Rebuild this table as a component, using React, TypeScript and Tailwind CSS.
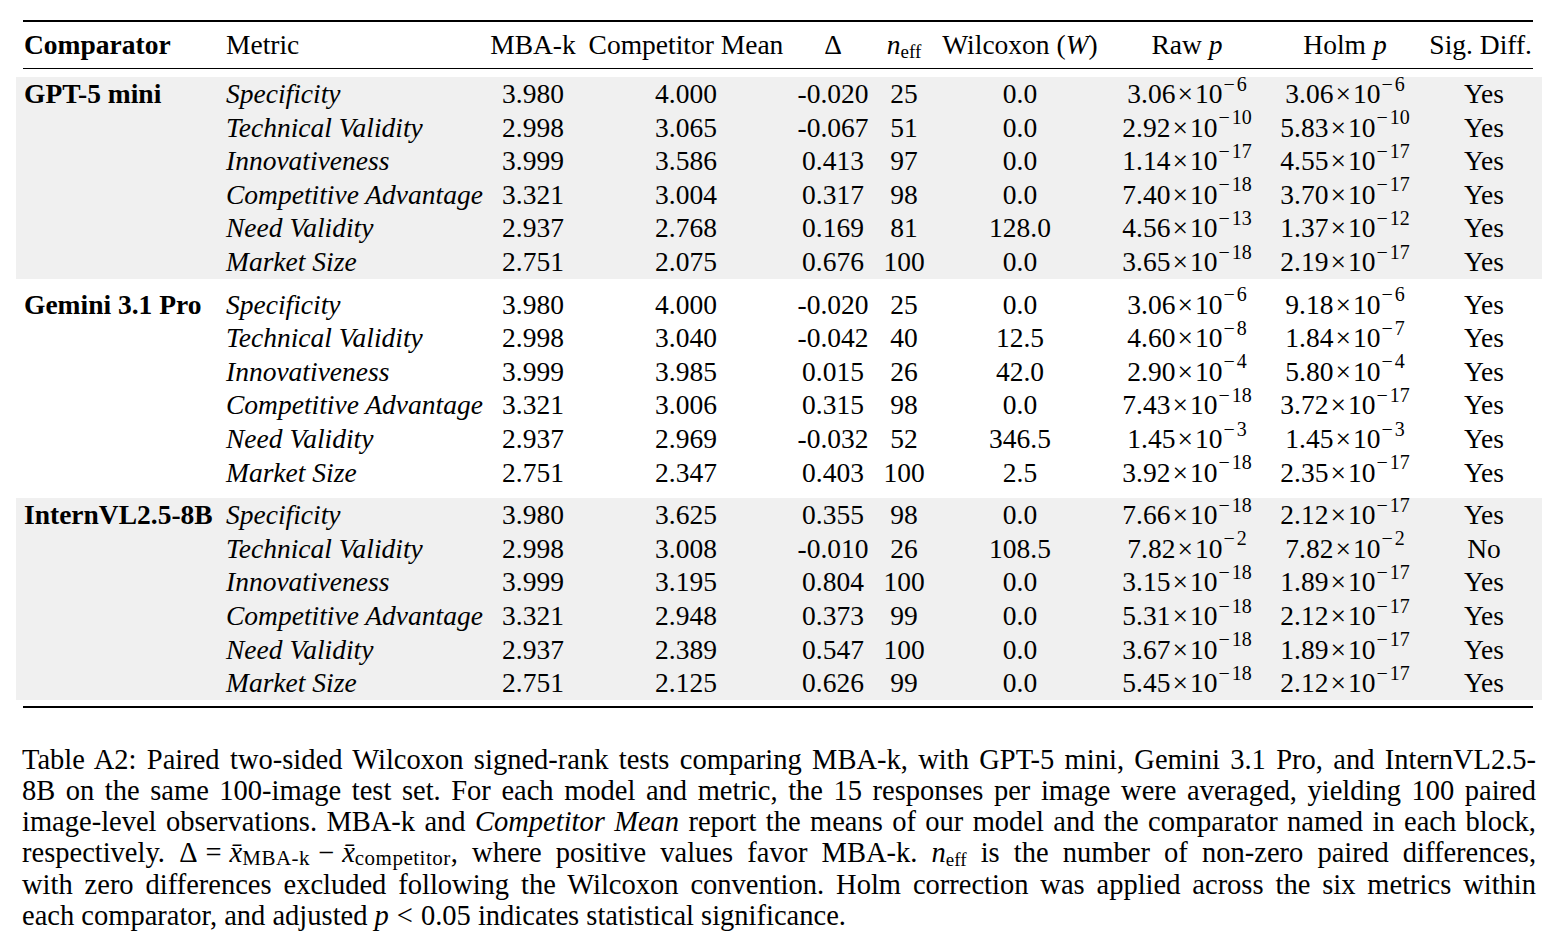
type Row = [string, string, string, string, string, string, [string, string], [string, string], string];

const groups: { name: string; shaded: boolean; rows: Row[] }[] = [
  {
    name: 'GPT-5 mini',
    shaded: true,
    rows: [
      ['Specificity', '3.980', '4.000', '-0.020', '25', '0.0', ['3.06', '6'], ['3.06', '6'], 'Yes'],
      ['Technical Validity', '2.998', '3.065', '-0.067', '51', '0.0', ['2.92', '10'], ['5.83', '10'], 'Yes'],
      ['Innovativeness', '3.999', '3.586', '0.413', '97', '0.0', ['1.14', '17'], ['4.55', '17'], 'Yes'],
      ['Competitive Advantage', '3.321', '3.004', '0.317', '98', '0.0', ['7.40', '18'], ['3.70', '17'], 'Yes'],
      ['Need Validity', '2.937', '2.768', '0.169', '81', '128.0', ['4.56', '13'], ['1.37', '12'], 'Yes'],
      ['Market Size', '2.751', '2.075', '0.676', '100', '0.0', ['3.65', '18'], ['2.19', '17'], 'Yes'],
    ],
  },
  {
    name: 'Gemini 3.1 Pro',
    shaded: false,
    rows: [
      ['Specificity', '3.980', '4.000', '-0.020', '25', '0.0', ['3.06', '6'], ['9.18', '6'], 'Yes'],
      ['Technical Validity', '2.998', '3.040', '-0.042', '40', '12.5', ['4.60', '8'], ['1.84', '7'], 'Yes'],
      ['Innovativeness', '3.999', '3.985', '0.015', '26', '42.0', ['2.90', '4'], ['5.80', '4'], 'Yes'],
      ['Competitive Advantage', '3.321', '3.006', '0.315', '98', '0.0', ['7.43', '18'], ['3.72', '17'], 'Yes'],
      ['Need Validity', '2.937', '2.969', '-0.032', '52', '346.5', ['1.45', '3'], ['1.45', '3'], 'Yes'],
      ['Market Size', '2.751', '2.347', '0.403', '100', '2.5', ['3.92', '18'], ['2.35', '17'], 'Yes'],
    ],
  },
  {
    name: 'InternVL2.5-8B',
    shaded: true,
    rows: [
      ['Specificity', '3.980', '3.625', '0.355', '98', '0.0', ['7.66', '18'], ['2.12', '17'], 'Yes'],
      ['Technical Validity', '2.998', '3.008', '-0.010', '26', '108.5', ['7.82', '2'], ['7.82', '2'], 'No'],
      ['Innovativeness', '3.999', '3.195', '0.804', '100', '0.0', ['3.15', '18'], ['1.89', '17'], 'Yes'],
      ['Competitive Advantage', '3.321', '2.948', '0.373', '99', '0.0', ['5.31', '18'], ['2.12', '17'], 'Yes'],
      ['Need Validity', '2.937', '2.389', '0.547', '100', '0.0', ['3.67', '18'], ['1.89', '17'], 'Yes'],
      ['Market Size', '2.751', '2.125', '0.626', '99', '0.0', ['5.45', '18'], ['2.12', '17'], 'Yes'],
    ],
  },
];

// p-values are typeset like LaTeX math: m × 10^-e
const Sci = ({ v }: { v: [string, string] }) => (
  <span className="whitespace-nowrap">
    {v[0]}
    <span className="mx-[2px]">×</span>
    10
    <sup className="text-[20px] top-[-0.62em] ml-[1px]">
      <span className="mr-[2px]">−</span>
      {v[1]}
    </sup>
  </span>
);

const Neff = () => (
  <span>
    <span className="italic">n</span>
    <sub className="text-[19px] bottom-[-0.2em]">eff</sub>
  </span>
);

const XBar = ({ sub }: { sub: string }) => (
  <span className="whitespace-nowrap">
    <span className="italic">x̄</span>
    <sub className="text-[21px] bottom-[-0.15em] tracking-[0.5px]">{sub}</sub>
  </span>
);

const cell = 'shrink-0 whitespace-nowrap';
const line = 'whitespace-nowrap text-justify [text-align-last:justify]';

const App = () => {
  return (
    <div className="w-[1558px] h-[948px] bg-white text-black font-['Liberation_Serif',serif] overflow-hidden pt-[20px] pl-[23px]">
      <div className="w-[1510px] text-[27.5px] leading-none">
        <div className="h-[2px] bg-black" />
        <div className="flex items-center h-[46px]">
          <div className={`${cell} w-[201px] pl-[1px] font-bold`}>Comparator</div>
          <div className={`${cell} w-[265px] pl-[2px]`}>Metric</div>
          <div className={`${cell} w-[88px] text-center`}>MBA-k</div>
          <div className={`${cell} w-[218px] text-center`}>Competitor Mean</div>
          <div className={`${cell} w-[76px] text-center`}>Δ</div>
          <div className={`${cell} w-[66px] text-center`}>
            <Neff />
          </div>
          <div className={`${cell} w-[166px] text-center`}>
            Wilcoxon (<span className="italic">W</span>)
          </div>
          <div className={`${cell} w-[168px] text-center`}>
            Raw <span className="italic">p</span>
          </div>
          <div className={`${cell} w-[148px] text-center`}>
            Holm <span className="italic">p</span>
          </div>
          <div className={`${cell} w-[113px] text-right`}>Sig. Diff.</div>
        </div>
        <div className="h-[1px] bg-black" />

        <div className="flex flex-col gap-[9px] pt-[8px]">
          {groups.map((g) => (
            <div
              key={g.name}
              className={`-ml-[7px] -mr-[9px] pl-[7px] pr-[9px] ${g.shaded ? 'bg-[#f0f0f0]' : 'bg-white'}`}
            >
              {g.rows.map((r, i) => (
                <div key={r[0]} className="flex items-center h-[33.6px]">
                  <div className={`${cell} w-[201px] pl-[1px] font-bold`}>{i === 0 ? g.name : ''}</div>
                  <div className={`${cell} w-[265px] pl-[2px] italic`}>{r[0]}</div>
                  <div className={`${cell} w-[88px] text-center`}>{r[1]}</div>
                  <div className={`${cell} w-[218px] text-center`}>{r[2]}</div>
                  <div className={`${cell} w-[76px] text-center`}>{r[3]}</div>
                  <div className={`${cell} w-[66px] text-center`}>{r[4]}</div>
                  <div className={`${cell} w-[166px] text-center`}>{r[5]}</div>
                  <div className={`${cell} w-[168px] text-center`}>
                    <Sci v={r[6]} />
                  </div>
                  <div className={`${cell} w-[148px] text-center`}>
                    <Sci v={r[7]} />
                  </div>
                  <div className={`${cell} w-[113px] pl-[17px] text-center`}>{r[8]}</div>
                </div>
              ))}
            </div>
          ))}
        </div>
        <div className="h-[2px] bg-black mt-[6px]" />
      </div>

      <div className="w-[1514px] -ml-[1px] mt-[36px] text-[28.5px] leading-[31.2px]">
        <p className={line}>
          Table A2: Paired two-sided Wilcoxon signed-rank tests comparing MBA-k, with GPT-5 mini, Gemini 3.1 Pro, and InternVL2.5-
        </p>
        <p className={line}>
          8B on the same 100-image test set. For each model and metric, the 15 responses per image were averaged, yielding 100 paired
        </p>
        <p className={line}>
          image-level observations. MBA-k and <span className="italic">Competitor Mean</span> report the means of our model and the comparator named in each block,
        </p>
        <p className={line}>
          respectively. Δ<span className="mx-[8px]">=</span>
          <XBar sub="MBA-k" />
          <span className="mx-[8px]">−</span>
          <XBar sub="competitor" />, where positive values favor MBA-k. <Neff /> is the number of non-zero paired differences,
        </p>
        <p className={line}>
          with zero differences excluded following the Wilcoxon convention. Holm correction was applied across the six metrics within
        </p>
        <p className="whitespace-nowrap">
          each comparator, and adjusted <span className="italic">p</span>
          <span className="mx-[8px]">&lt;</span>0.05 indicates statistical significance.
        </p>
      </div>
    </div>
  );
};

export default App;
